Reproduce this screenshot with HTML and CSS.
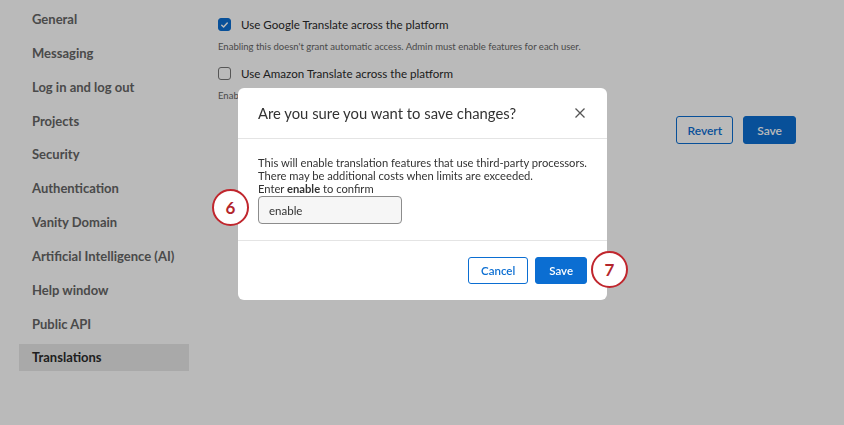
FILE: index.html
```html
<!DOCTYPE html>
<html lang="en">

<head>
    <meta charset="UTF-8">
    <meta name="viewport" content="width=device-width, initial-scale=1.0">
    <title>Translations</title>
    <link rel="stylesheet" href="styles.css">
</head>

<body>
    <div class="app">
        <!-- left nav -->
        <nav class="sidebar">
            <div class="nav-item">General</div>
            <div class="nav-item">Messaging</div>
            <div class="nav-item">Log in and log out</div>
            <div class="nav-item">Projects</div>
            <div class="nav-item">Security</div>
            <div class="nav-item">Authentication</div>
            <div class="nav-item">Vanity Domain</div>
            <div class="nav-item">Artificial Intelligence (AI)</div>
            <div class="nav-item">Help window</div>
            <div class="nav-item">Public API</div>
            <div class="nav-item active">Translations</div>
        </nav>

        <!-- settings -->
        <main class="content">
            <div class="option">
                <label class="check-row">
                    <span class="checkbox checked">
                        <svg viewBox="0 0 12 12" width="12" height="12"><path d="M3 6.2l2 2 4-4.4" fill="none" stroke="#fff" stroke-width="1.6" stroke-linecap="round" stroke-linejoin="round"/></svg>
                    </span>
                    Use Google Translate across the platform
                </label>
                <p class="hint">Enabling this doesn't grant automatic access. Admin must enable features for each user.</p>
            </div>
            <div class="option">
                <label class="check-row">
                    <span class="checkbox"></span>
                    Use Amazon Translate across the platform
                </label>
                <p class="hint">Enabling this doesn't grant automatic access. Admin must enable features for each user.</p>
            </div>
            <div class="actions">
                <button class="btn btn-outline">Revert</button>
                <button class="btn btn-primary">Save</button>
            </div>
        </main>
    </div>

    <!-- dimmed backdrop + dialog -->
    <div class="overlay"></div>
    <div class="modal">
        <div class="modal-header">
            <h2>Are you sure you want to save changes?</h2>
            <svg class="close" viewBox="0 0 12 12" width="12" height="12"><path d="M1.5 1.5l9 9M10.5 1.5l-9 9" stroke="#555" stroke-width="1.3"/></svg>
        </div>
        <div class="modal-body">
            <p>This will enable translation features that use third-party processors.</p>
            <p>There may be additional costs when limits are exceeded.</p>
            <p>Enter <b>enable</b> to confirm</p>
            <input class="confirm-input" type="text" value="enable">
        </div>
        <div class="modal-footer">
            <button class="btn btn-outline">Cancel</button>
            <button class="btn btn-primary">Save</button>
        </div>
    </div>

    <!-- step markers -->
    <div class="step step-6">6</div>
    <div class="step step-7">7</div>
</body>

</html>
```

FILE: styles.css
```css
body {
    margin: 0;
    background-color: #ffffff;
    font-family: Lato, "Liberation Sans", sans-serif;
    color: #333;
}

.app {
    display: flex;
    height: 425px;
}

/* left nav */
.sidebar {
    width: 170px;
    padding: 6px 0 0 19px;
    display: flex;
    flex-direction: column;
    gap: 6.85px;
}

.nav-item {
    height: 27px;
    line-height: 27px;
    padding-left: 13px;
    font-size: 13px;
    font-weight: 700;
    color: #666;
}

.nav-item.active {
    background-color: #e8e8e8;
    color: #2b2b2b;
}

/* settings */
.content {
    flex: 1;
    padding: 18px 48px 0 29px;
}

.check-row {
    display: flex;
    align-items: center;
    gap: 10px;
    font-size: 11.6px;
    height: 13px;
    color: #2b2b2b;
}

.checkbox {
    width: 11px;
    height: 11px;
    border: 1px solid #777;
    border-radius: 3px;
    display: flex;
    align-items: center;
    justify-content: center;
    background: #fff;
}

.checkbox.checked {
    background-color: #0b6ed2;
    border-color: #0b6ed2;
}

.hint {
    margin: 10px 0 14px;
    font-size: 9.5px;
    color: #666;
    height: 12px;
    line-height: 12px;
    white-space: nowrap;
}

.actions {
    display: flex;
    justify-content: flex-end;
    gap: 10px;
    margin-top: 8px;
}

.btn {
    font-family: inherit;
    font-size: 12px;
    font-weight: 600;
    height: 28px;
    border-radius: 3px;
    padding: 0 12px;
    cursor: pointer;
}

.btn-outline {
    background: #fff;
    color: #0b6ed2;
    border: 1px solid #0b6ed2;
}

.actions .btn-outline {
    padding: 0 10px;
}

.btn-primary {
    background: #0b6ed2;
    color: #fff;
    border: 1px solid #0b6ed2;
    padding: 0 13px;
}

.overlay {
    position: fixed;
    inset: 0;
    background: rgba(0, 0, 0, 0.27);
}

/* dialog */
.modal {
    position: absolute;
    left: 238px;
    top: 88px;
    width: 369px;
    background: #fff;
    border-radius: 6px;
}

.modal-header {
    height: 50px;
    display: flex;
    align-items: center;
    justify-content: space-between;
    padding: 0 21px 0 20px;
    border-bottom: 1px solid #e4e4e4;
}

.modal-header h2 {
    margin: 0;
    font-size: 14.8px;
    font-weight: 400;
    color: #333;
}

.modal-body {
    padding: 17px 20px 16px;
    border-bottom: 1px solid #e4e4e4;
}

.modal-body p {
    margin: 0;
    font-size: 11.2px;
    line-height: 13px;
    color: #333;
    white-space: nowrap;
}

.confirm-input {
    display: block;
    margin-top: 1px;
    width: 144px;
    height: 28px;
    box-sizing: border-box;
    border: 1px solid #8c8c8c;
    border-radius: 4px;
    background: #f6f6f6;
    padding: 0 10px;
    font-family: inherit;
    font-size: 11.5px;
    color: #333;
}

.modal-footer {
    height: 59px;
    display: flex;
    align-items: center;
    justify-content: flex-end;
    gap: 7px;
    padding: 0 20px;
}

.modal-footer .btn {
    height: 27px;
    font-size: 11.5px;
}

/* step markers */
.step {
    position: absolute;
    width: 33px;
    height: 33px;
    border: 2.5px solid #c0262d;
    border-radius: 50%;
    background: #fff;
    color: #b3262c;
    font-size: 17px;
    font-weight: 700;
    display: flex;
    align-items: center;
    justify-content: center;
}

.step-6 {
    left: 212px;
    top: 189px;
}

.step-7 {
    left: 591px;
    top: 251px;
}
```
